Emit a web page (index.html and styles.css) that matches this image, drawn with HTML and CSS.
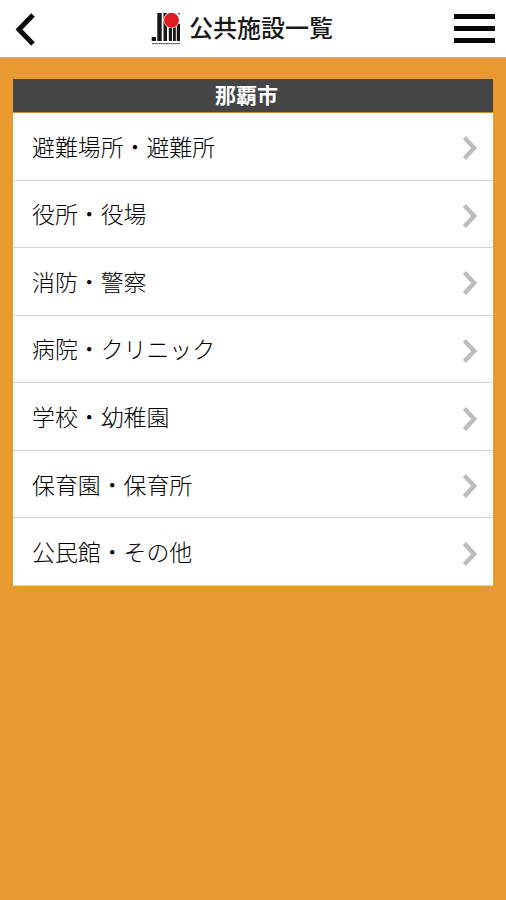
FILE: index.html
```html
<!DOCTYPE html>
<html lang="ja">
<head>
  <meta charset="UTF-8" />
  <meta name="viewport" content="width=device-width, initial-scale=1.0"/>
  <title>公共施設一覧</title>
  <link rel="stylesheet" href="styles.css">
</head>
<body>

  <header class="header">
    <a class="back" href="#" aria-label="戻る">
      <svg width="20" height="33" viewBox="0 0 20 33">
        <path d="M18 2 L4 16.5 L18 31" fill="none" stroke="#0c0c0c" stroke-width="5"/>
      </svg>
    </a>
    <div class="title">
      <svg class="logo" width="30" height="34" viewBox="0 0 30 34">
        <g fill="#151515">
          <rect x="0.7" y="25" width="4.3" height="4"/>
          <rect x="6.3" y="1" width="4.4" height="28"/>
          <rect x="12.5" y="1" width="3.5" height="28"/>
          <rect x="17.8" y="14" width="3.2" height="15"/>
          <rect x="22" y="14" width="2.8" height="15"/>
          <rect x="25.8" y="12" width="3.2" height="17"/>
          <rect x="27.4" y="1" width="1.4" height="1.4"/>
          <rect x="1" y="31" width="28" height="1.2" opacity="0.6"/>
        </g>
        <circle cx="20.5" cy="8.2" r="8.1" fill="#fff"/>
        <circle cx="20.5" cy="8.2" r="7.5" fill="#df1d20"/>
      </svg>
      <h1>公共施設一覧</h1>
    </div>
    <button class="menu" aria-label="メニュー">
      <span></span>
      <span></span>
      <span></span>
    </button>
  </header>

  <main class="list">
    <h2>那覇市</h2>
    <ul>
      <li><a href="#">避難場所・避難所</a></li>
      <li><a href="#">役所・役場</a></li>
      <li><a href="#">消防・警察</a></li>
      <li><a href="#">病院・クリニック</a></li>
      <li><a href="#">学校・幼稚園</a></li>
      <li><a href="#">保育園・保育所</a></li>
      <li><a href="#">公民館・その他</a></li>
    </ul>
  </main>

  <script>
    // Add an arrow to every row
    document.querySelectorAll('.list a').forEach(link => {
      link.insertAdjacentHTML('beforeend',
        '<svg width="16" height="26" viewBox="0 0 16 26">' +
        '<path d="M2.4 2.4 L12.2 13 L2.4 23.6" fill="none" stroke="#bdbdbd" stroke-width="4.4"/>' +
        '</svg>');
    });
  </script>
</body>
</html>
```
FILE: styles.css
```css
* {
  box-sizing: border-box;
  margin: 0;
  padding: 0;
}
body {
  min-height: 100vh;
  background-color: #e89a31;
  font-family: "Noto Sans CJK JP", sans-serif;
  color: #181818;
}
.header {
  display: flex;
  justify-content: space-between;
  align-items: center;
  height: 58px;
  padding: 0 11px 0 15px;
  background-color: #fff;
  border-bottom: 1px solid #c0b09c;
}
.back {
  display: flex;
  width: 42px;
  padding-top: 2px;
}
.title {
  display: flex;
  align-items: center;
  gap: 8px;
  margin-right: 27px;
}
.logo {
  margin-top: 1px;
}
.title h1 {
  font-size: 24px;
  font-weight: 500;
  line-height: 36px;
  margin-top: -4px;
}
.menu {
  display: flex;
  flex-direction: column;
  gap: 7px;
  width: 41px;
  border: none;
  background: none;
  cursor: pointer;
}
.menu span {
  height: 5px;
  background-color: #080808;
}
.list {
  margin: 21px 13px 0;
  background-color: #fff;
}
.list h2 {
  height: 34px;
  background-color: #454545;
  border-bottom: 1px solid #c98a35;
  color: #fff;
  font-size: 21px;
  font-weight: bold;
  line-height: 31px;
  text-align: center;
  padding-right: 13px;
}
.list ul {
  display: grid;
  grid-template-rows: repeat(7, 1fr);
  height: 473px;
  list-style: none;
}
.list li {
  border-bottom: 1px solid #d4d4d4;
}
.list a {
  display: flex;
  justify-content: space-between;
  align-items: center;
  height: 100%;
  padding: 0 15px 1px 19px;
  color: #000;
  font-size: 22.9px;
  font-weight: 300;
  text-decoration: none;
}
.list svg {
  margin-top: 5px;
}
```
